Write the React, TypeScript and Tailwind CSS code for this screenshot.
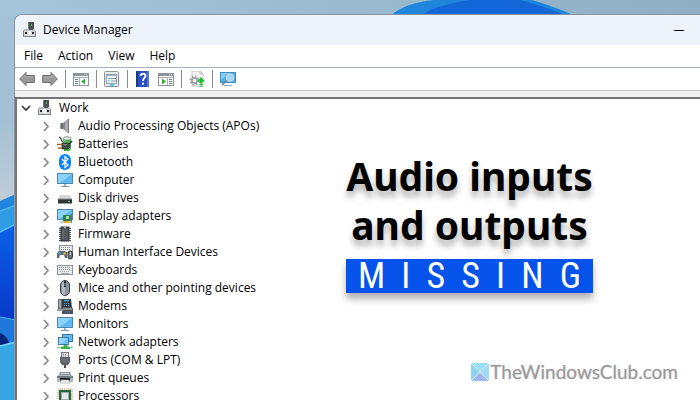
import type { ReactElement, ReactNode } from 'react'

type IconProps = { className?: string; children: ReactNode }

function Icon({ className = 'size-4', children }: IconProps): ReactElement {
  return (
    <svg viewBox="0 0 16 16" className={`shrink-0 ${className}`} aria-hidden="true">
      {children}
    </svg>
  )
}

function DeviceIcon(): ReactElement {
  return (
    <Icon>
      <rect x="6" y="0" width="6" height="7" fill="#4a4e52" />
      <path d="M6 0h1v7H6z" fill="#777b7f" />
      <rect x="9" y="2" width="1" height="2" fill="#3fd15c" />
      <path d="M2 7h10l2 2v6H1V9z" fill="#b9bbbd" />
      <path d="M1 9h13v5H1z" fill="#d4d6d8" />
      <path d="M1 14.500h13M1.500 9v6M13.500 9v6" stroke="#85888b" />
      <rect x="6" y="9" width="3" height="4" fill="#f2f3f3" />
      <rect x="3" y="10" width="2" height="2" fill="#25282b" />
      <rect x="10" y="10" width="2" height="2" fill="#25282b" />
      <rect x="7" y="7" width="4" height="1" fill="#5b5e61" />
    </Icon>
  )
}

function MonitorShape(): ReactElement {
  return (
    <>
      <rect x=".5" y="1.500" width="15" height="10" fill="#5fb9f2" stroke="#4b88ab" />
      <path d="M1 2h14L3 11H1z" fill="#8bd2fb" />
      <path d="M7 12h2v2H7z" fill="#a4b3bd" />
      <path d="M4 14h8v1H4z" fill="#7a99ad" />
    </>
  )
}

const speaker = (
  <Icon>
    <path d="M3 5h3v6H3z" fill="#6d7175" />
    <path d="M6 5l5-4v14l-5-4z" fill="#85898c" />
    <path d="M8 3.500l3-2.500v14l-3-2.500z" fill="#aaadb0" />
    <path d="M11.500 1v14" stroke="#75797d" />
    <path d="M3.500 5v6" stroke="#9da1a4" />
  </Icon>
)

const battery = (
  <Icon>
    <path d="M6 2h7l1 2v9l-2 2H7z" fill="#35b53c" />
    <ellipse cx="10" cy="2.500" rx="3.800" ry="1.800" fill="#dfe5df" stroke="#617064" strokeWidth=".7" />
    <path d="M8 4v3M12 5v8" stroke="#91e191" />
    <path d="M2 1c3 0 1 4 4 5" fill="none" stroke="#303336" strokeWidth="1.200" />
    <path d="M5 7h4c3 0 4 1 4 3s-1 3-4 3H5z" fill="#484c50" stroke="#222" strokeWidth=".6" />
    <path d="M6 8.500h4" stroke="#8a8e91" />
    <path d="M0 8.500h5M1 12h4" stroke="#a66522" strokeWidth="1.300" />
    <path d="M12 8l3-3" stroke="#222" strokeWidth="1.400" />
  </Icon>
)

const bluetooth = (
  <Icon>
    <rect x="2" y="0" width="12" height="16" rx="6" fill="#0a84f6" />
    <path d="M5 5l6 6-3 2.500v-11L11 5l-6 6" fill="none" stroke="#fff" strokeWidth="1.200" />
  </Icon>
)

const computer = (
  <Icon>
    <MonitorShape />
  </Icon>
)

const disk = (
  <Icon>
    <path d="M3 5h10l2 4H1z" fill="#d6d8da" />
    <path d="M1 9h14v4.500H1z" fill="#303336" />
    <path d="M1 9h14" stroke="#8a8d90" />
    <rect x="11" y="11" width="2" height="1" fill="#43e45f" />
  </Icon>
)

const display = (
  <Icon>
    <rect x=".5" y="1.500" width="15" height="10" fill="#5fb9f2" stroke="#4b88ab" />
    <path d="M1 2h13L3 11H1z" fill="#8bd2fb" />
    <path d="M3 14h4" stroke="#7a99ad" />
    <rect x="6" y="7" width="9" height="6" fill="#26844b" />
    <rect x="9" y="8" width="3" height="3" fill="#b4d6bd" />
    <path d="M14.500 6v9" stroke="#697075" />
    <path d="M7 14h6" stroke="#ecaa32" strokeWidth="2" />
  </Icon>
)

const chip = (
  <Icon>
    <path
      d="M2 2.500h12M2 4.500h12M2 6.500h12M2 8.500h12M2 10.500h12M2 12.500h12M2 14.500h12"
      stroke="#55585b"
    />
    <rect x="4" y="1" width="8" height="14" fill="#54585b" stroke="#2a2c2e" />
    <path d="M7 1h2v1H7z" fill="#c6c8ca" />
    <path d="M6 4v9" stroke="#74787c" />
  </Icon>
)

const hid = (
  <Icon>
    <rect x="2.500" y="1.500" width="13" height="7" fill="#e9ebec" stroke="#8f9498" />
    <path d="M4 3.500h10M4 5.500h10" stroke="#858a8f" strokeDasharray="1 1" />
    <path d="M0 14V9l2-2h6l2 2v5H8l-1-3H3l-1 3z" fill="#60676d" />
    <circle cx="2.500" cy="9.500" r="1.300" fill="#4aa8ed" />
    <circle cx="7.500" cy="9.500" r="1.300" fill="#e2b13c" />
    <rect x="11" y="7" width="4.500" height="8" rx="2.200" fill="#6c757d" stroke="#2e3236" />
    <path d="M13.200 8v3" stroke="#d7dadc" />
  </Icon>
)

const keyboard = (
  <Icon>
    <rect x=".5" y="3.500" width="15" height="9" fill="#e6e8e9" stroke="#8f9498" />
    <path d="M2 5.500h12M2 7.500h12" stroke="#858a8f" strokeDasharray="1 1" />
    <path d="M3 9.500h10" stroke="#a1a5a8" strokeDasharray="1 1" />
    <path d="M4 11.500h8" stroke="#a9adb0" />
  </Icon>
)

const mouse = (
  <Icon>
    <rect x="3.500" y=".5" width="9" height="15" rx="4.500" fill="#8c949b" stroke="#3b4045" />
    <path d="M5 4c0-2 2-3 3-3v14c-2 0-3-1-3-3z" fill="#b5bcc1" />
    <path d="M8 1v6" stroke="#22262a" strokeWidth="2" />
    <path d="M8 3v3" stroke="#7fa6d8" />
  </Icon>
)

const modem = (
  <Icon>
    <path d="M1 1h5v10H1z" fill="#666b70" />
    <path d="M2 2h2v8H2z" fill="#a4a9ad" />
    <path d="M5 1h9l1 9H5z" fill="#363a3e" />
    <path d="M7 2.500h5" stroke="#3ba4ef" strokeWidth="1.500" />
    <path d="M7 5.500h6M7 7.500h6" stroke="#3ba4ef" strokeDasharray="1 1" />
    <path d="M5 11l1-2h9l1 2v5H5z" fill="#4b5055" />
    <path d="M6 10h9v2H6z" fill="#8a9095" />
    <path d="M8 14h5" stroke="#3ba4ef" strokeDasharray="1 1" />
    <path d="M0 11h6v2H0z" fill="#9ba0a4" />
  </Icon>
)

const network = (
  <Icon>
    <rect x="5.500" y=".5" width="10" height="7" fill="#5fb9f2" stroke="#39799f" />
    <rect x="1.500" y="3.500" width="10" height="7" fill="#6ec4f7" stroke="#39799f" />
    <path d="M2 4h8l-6 6H2z" fill="#96d8fc" />
    <path d="M7 11h3v1l3 1v2H4v-2l3-1z" fill="#39b54a" />
    <path d="M0 13.500h4M13 13.500h3" stroke="#b5bfc5" strokeWidth="2" />
  </Icon>
)

const ports = (
  <Icon>
    <rect x="4.500" y=".5" width="7" height="5" fill="#e3e5e6" stroke="#6f7478" />
    <path d="M6 2.500h4M6 4h4" stroke="#6f7478" strokeDasharray="1 1" />
    <path d="M3 5h10v5l-2 3H5l-2-3z" fill="#5a5e62" />
    <path d="M5 6v4M7 6v5M9 6v5M11 6v4" stroke="#7d8185" />
    <path d="M7 13h2v3H7z" fill="#4b4f52" />
  </Icon>
)

const printer = (
  <Icon>
    <path d="M3 2h10l1 3H2z" fill="#8a9095" />
    <path d="M4 3h8v1H4z" fill="#d9dcde" />
    <path d="M1 5h14l1 2v5H0V7z" fill="#b3b8bc" />
    <path d="M0 6h16v2H0z" fill="#71777c" />
    <path d="M3 8h10v3H3z" fill="#202326" />
    <path d="M4 10h8l1 3H3z" fill="#f2f3f3" stroke="#979ca0" strokeWidth=".6" />
    <rect x="13" y="6" width="1" height="1" fill="#3de05c" />
  </Icon>
)

const processor = (
  <Icon>
    <rect x="1" y="1" width="14" height="14" fill="none" stroke="#b98a2d" strokeDasharray="1 1" />
    <rect x="2" y="2" width="12" height="12" fill="#20693f" />
    <rect x="4.500" y="4.500" width="7" height="7" fill="#e4e6e7" stroke="#a3a7aa" />
  </Icon>
)

const devices: Array<{ label: string; icon: ReactElement }> = [
  { label: 'Audio Processing Objects (APOs)', icon: speaker },
  { label: 'Batteries', icon: battery },
  { label: 'Bluetooth', icon: bluetooth },
  { label: 'Computer', icon: computer },
  { label: 'Disk drives', icon: disk },
  { label: 'Display adapters', icon: display },
  { label: 'Firmware', icon: chip },
  { label: 'Human Interface Devices', icon: hid },
  { label: 'Keyboards', icon: keyboard },
  { label: 'Mice and other pointing devices', icon: mouse },
  { label: 'Modems', icon: modem },
  { label: 'Monitors', icon: computer },
  { label: 'Network adapters', icon: network },
  { label: 'Ports (COM & LPT)', icon: ports },
  { label: 'Print queues', icon: printer },
  { label: 'Processors', icon: processor },
]

const tools: Array<{ label: string; icon: ReactElement } | null> = [
  {
    label: 'Back',
    icon: (
      <Icon>
        <path d="M.7 8L7 1.500v3h8.300v7H7v3z" fill="#999" stroke="#6a6a6a" />
        <path d="M3 7.500l3-3v1.500h8.300" fill="none" stroke="#b4b4b4" />
      </Icon>
    ),
  },
  {
    label: 'Forward',
    icon: (
      <Icon>
        <path d="M15.300 8L9 1.500v3H.7v7H9v3z" fill="#999" stroke="#6a6a6a" />
        <path d="M1.500 6H10V4.500l3 3" fill="none" stroke="#b4b4b4" />
      </Icon>
    ),
  },
  null,
  {
    label: 'Show/Hide Console Tree',
    icon: (
      <Icon>
        <rect x=".5" y="2.500" width="15" height="12" fill="#fff" stroke="#8b939c" />
        <path d="M1 4h14" stroke="#8b939c" strokeWidth="2" />
        <path d="M11 3.500h3" stroke="#fff" strokeDasharray="1 1" />
        <path d="M1 6.500h14M6.500 7v7" stroke="#a7aeb6" />
        <path d="M2 8.500h3M2 10.500h3M2 12.500h3" stroke="#5a7fa8" />
        <path d="M12 7.500v6l-4-3z" fill="#2eb135" />
      </Icon>
    ),
  },
  null,
  {
    label: 'Properties',
    icon: (
      <Icon>
        <rect x=".5" y=".5" width="14" height="15" rx="1" fill="#e9eaeb" stroke="#8e9398" />
        <rect x="2.500" y="3.500" width="10" height="9" fill="#fff" stroke="#8da0b8" />
        <path d="M3 4.500h9" stroke="#9cafc7" />
        <path d="M4 7.500h2M4 10h2" stroke="#22b4ee" />
        <path d="M7 7.500h5M7 10h5" stroke="#7d8fa5" />
        <path d="M6 14h4" stroke="#20c5ee" strokeWidth="1.500" />
      </Icon>
    ),
  },
  null,
  {
    label: 'Help',
    icon: (
      <Icon>
        <rect x="1" y="0" width="13" height="16" fill="#2c50bd" />
        <path d="M1 0h2v16H1z" fill="#19398e" />
        <path d="M12 0h2v16h-2z" fill="#4f74d8" />
        <path d="M5.500 5c0-3 5-3 5 0 0 2-2.500 2-2.500 5" fill="none" stroke="#fff" strokeWidth="1.800" />
        <circle cx="8" cy="12.700" r="1.100" fill="#fff" />
      </Icon>
    ),
  },
  {
    label: 'Show/Hide Action Pane',
    icon: (
      <Icon>
        <rect x=".5" y="2.500" width="15" height="12" fill="#fff" stroke="#8b939c" />
        <path d="M1 4h14" stroke="#8b939c" strokeWidth="2" />
        <path d="M11 3.500h3" stroke="#fff" strokeDasharray="1 1" />
        <path d="M1 6.500h14M9.500 7v7" stroke="#a7aeb6" />
        <path d="M11 8.500h3M11 10.500h3M11 12.500h3" stroke="#5a7fa8" />
        <path d="M4 7.500v6l4-3z" fill="#2eb135" />
      </Icon>
    ),
  },
  null,
  {
    label: 'Update driver',
    icon: (
      <Icon>
        <path d="M3 0h8l3 3v12H3z" fill="#f5f5f5" stroke="#c3c6c9" />
        <path d="M11 0v3h3" fill="none" stroke="#b5b8bb" />
        <circle cx="5.500" cy="9.500" r="4" fill="none" stroke="#9a9da0" strokeWidth="2" strokeDasharray="1.600 1.540" />
        <circle cx="5.500" cy="9.500" r="2.600" fill="#f0f0f0" stroke="#9a9da0" strokeWidth="1.500" />
        <path d="M12 6l4 4.500h-2.500v2h-3v-2H8z" fill="#1fbe2e" />
        <path d="M10.500 13.500h3M10.500 15.300h3" stroke="#1fbe2e" />
      </Icon>
    ),
  },
  null,
  {
    label: 'Scan for hardware changes',
    icon: (
      <Icon>
        <rect x=".5" y="1.500" width="15" height="10" fill="#4fb0ec" stroke="#3d8fc4" />
        <path d="M1 2h8L1 9z" fill="#84cdf8" />
        <path d="M4 14.500h8" stroke="#86a9be" />
        <path d="M7 9l-5 5" stroke="#6f8da3" strokeWidth="2" />
        <circle cx="10" cy="6.500" r="4" fill="#9ed6f8" stroke="#e2eef5" />
        <circle cx="10" cy="6.500" r="4.500" fill="none" stroke="#6f9bb8" strokeWidth=".7" />
      </Icon>
    ),
  },
]

const menus = ['File', 'Action', 'View', 'Help']

function Wallpaper(): ReactElement {
  return (
    <div className="absolute inset-0 bg-linear-to-r from-[#a5c5da] to-[#8eafc4]">
      <svg className="absolute top-0 left-0 h-[400px] w-4" viewBox="0 0 16 400" aria-hidden="true">
        <defs>
          <linearGradient id="sky" x1="0" y1="0" x2="0" y2="1">
            <stop offset="0" stopColor="#a3c4d9" />
            <stop offset=".3" stopColor="#a3c0d4" />
            <stop offset=".5" stopColor="#c0cdd8" />
          </linearGradient>
          <linearGradient id="petal" x1="0" y1="0" x2="0" y2="1">
            <stop offset="0" stopColor="#0b62e8" />
            <stop offset="1" stopColor="#0838c8" />
          </linearGradient>
        </defs>
        <path d="M0 0h16v400H0z" fill="url(#sky)" />
        <path d="M0 201l16-7v206H0z" fill="#1f86dc" />
        <path d="M0 211l16-6v20L0 232z" fill="#2f9be2" />
        <path d="M0 211l16-6" stroke="#5cc4ee" />
        <path d="M0 232l16-8v96L0 317z" fill="url(#petal)" />
        <path d="M0 232l16-8" stroke="#55c0f0" strokeWidth="1.500" />
        <path d="M0 317l16 3v25L0 348z" fill="#1e78dc" />
        <path d="M0 317l16 3" stroke="#4ab4f0" />
        <path d="M0 333c5 2 8 6 9 10l-9 3z" fill="#06257f" />
        <path d="M0 346l16-4v58H0z" fill="#36a6e4" />
        <path d="M0 346l16-4" stroke="#6fd8f6" strokeWidth="1.500" />
      </svg>
      <svg className="absolute top-0 left-[390px] h-4 w-[186px]" viewBox="0 0 186 16" aria-hidden="true">
        <path d="M0 16C12 6 26 2 44 0h98c14 4 28 9 43 16z" fill="#1f86dc" />
        <path d="M30 16c10-8 30-13 50-16h50c16 4 32 9 46 16z" fill="#1266d8" />
      </svg>
    </div>
  )
}

function DeviceTree(): ReactElement {
  return (
    <div className="text-xs leading-[18px]">
      <div className="flex h-[18px] items-center pl-1">
        <svg viewBox="0 0 10 10" className="size-[10px]" aria-hidden="true">
          <path d="M1 3l4 4 4-4" fill="none" stroke="#333" strokeWidth="1.600" />
        </svg>
        <span className="ml-[6px]">
          <DeviceIcon />
        </span>
        <span className="ml-[6px]">Work</span>
      </div>
      <ul>
        {devices.map((device) => (
          <li key={device.label} className="flex h-[18px] items-center pl-6">
            <svg viewBox="0 0 10 10" className="size-[10px]" aria-hidden="true">
              <path d="M3 1l4 4.500L3 10" fill="none" stroke="#8a8a8a" strokeWidth="1.700" />
            </svg>
            <span className="ml-[6px]">{device.icon}</span>
            <span className="ml-[5px] whitespace-nowrap">{device.label}</span>
          </li>
        ))}
      </ul>
    </div>
  )
}

function Headline(): ReactElement {
  return (
    <div className="absolute top-[151px] right-[107px] w-[247px]">
      <h1 className="text-center font-['Noto_Sans','Open_Sans',sans-serif] text-[39px] leading-[49px] font-bold whitespace-nowrap [text-shadow:0_6px_6px_rgba(0,0,0,0.3)]">
        Audio inputs
        <br />
        and outputs
      </h1>
      <p
        aria-label="MISSING"
        className="mt-[10px] flex h-[34px] items-center justify-between bg-[#0553ea] px-3 font-['Roboto_Condensed',Roboto,sans-serif] text-[36px] leading-[34px] font-normal text-white shadow-[0_6px_7px_rgba(0,0,0,0.3)]"
      >
        {Array.from('MISSING').map((letter, index) => (
          <span key={index}>{letter}</span>
        ))}
      </p>
    </div>
  )
}

function Watermark(): ReactElement {
  return (
    <a
      href="#"
      className="absolute right-[22px] bottom-4 flex items-center gap-px font-[Lato,sans-serif] text-[19px] leading-6 text-[#999] [text-shadow:0_0_2px_#ccc]"
    >
      <svg viewBox="0 0 18 18" className="size-[18px]" aria-hidden="true">
        <path d="M0 0h18v18H0z" fill="#9adffb" />
        <path d="M0 0l9 9-9 9z" fill="#8dd3f8" />
        <path d="M18 0L9 9l9 9z" fill="#a0d8f8" />
        <path d="M0 18l9-9 9 9z" fill="#a0b4f0" />
        <path d="M0 0l18 18M18 0L0 18" stroke="#e4f6fe" />
      </svg>
      TheWindowsClub.com
    </a>
  )
}

export default function App(): ReactElement {
  return (
    <main className="relative flex h-screen overflow-hidden pt-[14px] pl-[14px] font-['Open_Sans','Noto_Sans',sans-serif] text-xs text-black">
      <Wallpaper />
      <section className="relative flex min-w-0 flex-1 flex-col rounded-tl-lg border-t border-l border-[#8495a8] bg-white">
        <header className="flex h-[30px] shrink-0 items-center rounded-tl-lg bg-[#eef3fa] pr-4 pl-[7px]">
          <DeviceIcon />
          <h2 className="ml-[5px] flex-1">Device Manager</h2>
          <button type="button" aria-label="Minimize" className="flex h-6 items-center">
            <span className="h-px w-[10px] bg-black" />
          </button>
        </header>
        <nav className="flex h-[22px] shrink-0 items-center gap-[15px] pl-[9px]">
          {menus.map((menu) => (
            <button key={menu} type="button">
              {menu}
            </button>
          ))}
        </nav>
        <div className="flex h-6 shrink-0 items-center gap-[7px] border-y border-t-[#a9b1bb] border-b-[#c8c8c8] pl-1">
          {tools.map((tool, index) =>
            tool ? (
              <button key={tool.label} type="button" aria-label={tool.label}>
                {tool.icon}
              </button>
            ) : (
              <span key={index} className="h-[18px] w-px bg-[#8c8c8c]" />
            ),
          )}
        </div>
        <div className="flex min-h-0 flex-1 flex-col bg-[#f0f0f0] pt-[6px]">
          <div className="min-h-0 flex-1 overflow-hidden border-t-2 border-l-2 border-[#757575] bg-white">
            <DeviceTree />
          </div>
        </div>
      </section>
      <Headline />
      <Watermark />
    </main>
  )
}
